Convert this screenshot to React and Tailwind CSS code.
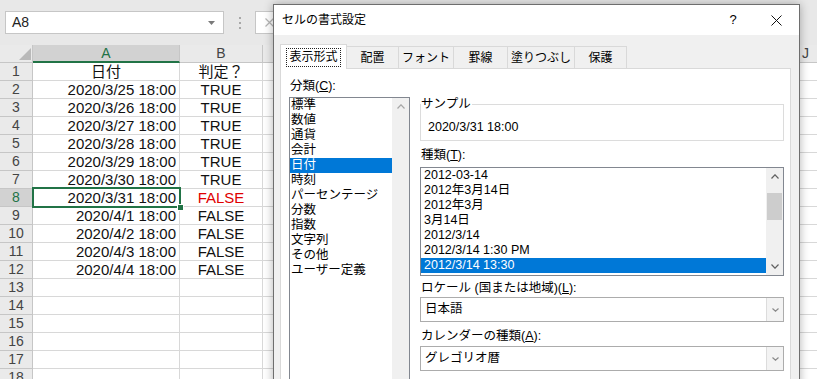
import React from 'react';

const F = "font-['Liberation_Sans','Noto_Sans_CJK_JP',sans-serif]";

function Chevron({ dir = 'down', color = '#606060', w = 8, h = 5 }) {
  const pts =
    dir === 'up'
      ? `0.5,${h - 0.5} ${w / 2},0.8 ${w - 0.5},${h - 0.5}`
      : `0.5,0.5 ${w / 2},${h - 0.8} ${w - 0.5},0.5`;
  return (
    <svg width={w} height={h} viewBox={`0 0 ${w} ${h}`}>
      <polyline points={pts} fill="none" stroke={color} strokeWidth="1.2" />
    </svg>
  );
}

// columns C..I lie under the dialog; only J shows at the right edge
const restCols = ['', '', '', '', '', '', '', 'J'];
const restW = ['w-[72px]', 'w-[72px]', 'w-[72px]', 'w-[73px]', 'w-[73px]', 'w-[72px]', 'w-[73px]', 'w-[72px]'];

const data = [
  { a: '日付', b: '判定？', head: true },
  { a: '2020/3/25 18:00', b: 'TRUE' },
  { a: '2020/3/26 18:00', b: 'TRUE' },
  { a: '2020/3/27 18:00', b: 'TRUE' },
  { a: '2020/3/28 18:00', b: 'TRUE' },
  { a: '2020/3/29 18:00', b: 'TRUE' },
  { a: '2020/3/30 18:00', b: 'TRUE' },
  { a: '2020/3/31 18:00', b: 'FALSE', sel: true },
  { a: '2020/4/1 18:00', b: 'FALSE' },
  { a: '2020/4/2 18:00', b: 'FALSE' },
  { a: '2020/4/3 18:00', b: 'FALSE' },
  { a: '2020/4/4 18:00', b: 'FALSE' },
  {},
  {},
  {},
  {},
  {},
  {},
];

function Excel() {
  return (
    <div className="flex flex-col">
      {/* formula bar band */}
      <div className="h-[45px] bg-[#e8e8e8] flex items-start pt-[11px] pl-[5px]">
        <div className="w-[219px] h-[23px] bg-white border border-[#c6c6c6] flex items-center justify-between pl-[6px] pr-[8px] text-[14px] text-[#222]">
          <span>A8</span>
          <svg width="7" height="4" viewBox="0 0 7 4">
            <polygon points="0,0 7,0 3.5,4" fill="#7a7a7a" />
          </svg>
        </div>
        <div className="w-[31px] h-[23px] flex flex-col items-center justify-center gap-[3px]">
          <div className="w-[2px] h-[2px] bg-[#a8a8a8]" />
          <div className="w-[2px] h-[2px] bg-[#a8a8a8]" />
          <div className="w-[2px] h-[2px] bg-[#a8a8a8]" />
        </div>
        <div className="w-[60px] h-[23px] bg-white border border-[#c6c6c6] flex items-center pl-[9px]">
          <svg width="9" height="9" viewBox="0 0 9 9">
            <path d="M0.5 0.5L8.5 8.5M8.5 0.5L0.5 8.5" stroke="#b5b5b5" strokeWidth="1.2" />
          </svg>
        </div>
      </div>

      {/* column headers */}
      <div className="flex h-[18px] text-[14px] leading-[17px] text-[#444] bg-[#eaeaea]">
        <div className="w-[33px] shrink-0 border-r border-b border-[#c6c6c6] flex items-end justify-end pr-[1px] pb-[2px]">
          <svg width="12" height="12" viewBox="0 0 12 12">
            <polygon points="12,0 12,12 0,12" fill="#b9b9b9" />
          </svg>
        </div>
        <div className="w-[147px] shrink-0 bg-[#d2d2d2] text-[#217346] border-r border-[#c6c6c6] border-b-2 border-b-[#217346] text-center">
          A
        </div>
        <div className="w-[83px] shrink-0 border-r border-b border-[#c6c6c6] text-center">B</div>
        {restCols.map((c, i) => (
          <div key={i} className={`${restW[i]} shrink-0 border-r border-b border-[#c6c6c6] text-center`}>
            {c}
          </div>
        ))}
      </div>

      {/* rows */}
      {data.map((r, i) => (
        <div key={i} className="flex h-[18px] leading-[17px] text-[15px] text-[#111]">
          <div
            className={`w-[33px] shrink-0 border-r border-b border-[#c6c6c6] text-center text-[14px] ${
              r.sel ? 'bg-[#d2d2d2] text-[#217346]' : 'bg-[#eaeaea] text-[#444]'
            }`}
          >
            {i + 1}
          </div>
          <div
            className={`relative w-[147px] shrink-0 border-r border-b border-[#d8d8d8] ${
              r.head ? 'text-center' : 'text-right pr-[3px]'
            }`}
          >
            {r.a}
            {r.sel && (
              <>
                <div className="absolute -left-px -top-[2px] -right-[2px] -bottom-[2px] border-2 border-[#217346] z-10" />
                <div className="absolute -right-[5px] -bottom-[5px] w-[7px] h-[7px] bg-[#217346] border border-white z-20" />
              </>
            )}
          </div>
          <div
            className={`w-[83px] shrink-0 border-r border-b border-[#d8d8d8] text-center ${
              r.sel ? 'text-[#e00000]' : ''
            }`}
          >
            {r.b}
          </div>
          {restW.map((w, j) => (
            <div key={j} className={`${w} shrink-0 border-r border-b border-[#d8d8d8]`} />
          ))}
        </div>
      ))}
    </div>
  );
}

const cats = ['標準', '数値', '通貨', '会計', '日付', '時刻', 'パーセンテージ', '分数', '指数', '文字列', 'その他', 'ユーザー定義'];
const types = ['2012-03-14', '2012年3月14日', '2012年3月', '3月14日', '2012/3/14', '2012/3/14 1:30 PM', '2012/3/14 13:30'];

const tabs = [
  { t: '表示形式', w: 'w-[67px]', sel: true },
  { t: '配置', w: 'w-[53px]' },
  { t: 'フォント', w: 'w-[56px]' },
  { t: '罫線', w: 'w-[55px]' },
  { t: '塗りつぶし', w: 'w-[68px]' },
  { t: '保護', w: 'w-[53px]' },
];

function Combo({ value }) {
  return (
    <div className="h-[25px] border border-[#acacac] bg-white flex">
      <div className="flex-1 pl-[4px] flex items-center">{value}</div>
      <div className="w-[17px] border-l border-[#dcdcdc] bg-[#f3f3f3] flex items-center justify-center">
        <Chevron color="#8a8a8a" w={7} h={4} />
      </div>
    </div>
  );
}

function Dialog() {
  return (
    <div
      className={`absolute left-[273px] top-[4px] w-[527px] h-[430px] flex flex-col bg-[#f0f0f0] border border-[#6e6e6e] shadow-[0_0_9px_rgba(0,0,0,0.3)] text-[12.5px] text-black ${F}`}
    >
      <div className="h-[30px] shrink-0 bg-white flex items-center">
        <span className="pl-[8px] text-[12px]">セルの書式設定</span>
        <div className="ml-auto w-[46px] flex justify-center pl-[6px] text-[13px]">?</div>
        <div className="w-[46px] flex justify-center">
          <svg width="11" height="11" viewBox="0 0 11 11">
            <path d="M0.5 0.5L10.5 10.5M10.5 0.5L0.5 10.5" stroke="#111" strokeWidth="1" />
          </svg>
        </div>
      </div>

      <div className="flex-1 flex flex-col pt-[9px] pl-[6px] pr-[8px]">
        <div className="flex items-end h-[24px] shrink-0 text-[12px]">
          {tabs.map((tb, i) => (
            <div
              key={tb.t}
              className={`${tb.w} shrink-0 flex items-center justify-center overflow-hidden border-t border-l border-r border-[#d9d9d9] ${
                i > 0 ? '-ml-px' : ''
              } ${tb.sel ? 'h-[25px] -mb-px bg-white relative z-10' : 'h-[22px] bg-[#f0f0f0]'}`}
            >
              {tb.sel ? (
                <span className="border border-dotted border-[#222] px-[2px] leading-[17px]">{tb.t}</span>
              ) : (
                <span className="leading-[16px]">{tb.t}</span>
              )}
            </div>
          ))}
        </div>

        <div className="flex-1 bg-white border border-[#d9d9d9] flex items-start pl-[8px] pt-[9px]">
          {/* category column */}
          <div className="w-[121px] shrink-0 flex flex-col">
            <div className="h-[16px] leading-[16px] pl-px">
              分類(<span className="underline">C</span>):
            </div>
            <div className="mt-[3px] h-[300px] border border-[#828790] flex">
              <div className="flex-1 flex flex-col">
                {cats.map((c, i) => (
                  <div
                    key={c}
                    className={`h-[15px] leading-[15px] pl-px ${i === 4 ? 'bg-[#0078d7] text-white' : ''}`}
                  >
                    {c}
                  </div>
                ))}
              </div>
              <div className="w-[17px] bg-[#f0f0f0] flex flex-col items-center pt-[6px]">
                <Chevron dir="up" color="#a6a6a6" />
              </div>
            </div>
          </div>

          {/* right column */}
          <div className="ml-[10px] w-[364px] shrink-0 mt-[19px] flex flex-col">
            <fieldset className="h-[44px] border border-[#dcdcdc]">
              <legend className="leading-[15px] pr-[1px]">サンプル</legend>
              <div className="pl-[7px] pt-[7px] leading-[16px]">2020/3/31 18:00</div>
            </fieldset>

            <div className="mt-[6px] h-[16px] leading-[16px] pl-px">
              種類(<span className="underline">T</span>):
            </div>
            <div className="mt-[4px] h-[109px] border border-[#828790] flex">
              <div className="flex-1 flex flex-col">
                {types.map((t, i) => (
                  <div
                    key={t}
                    className={`h-[15px] leading-[15px] pl-[3px] ${i === 6 ? 'bg-[#0078d7] text-white' : ''}`}
                  >
                    {t}
                  </div>
                ))}
              </div>
              <div className="w-[17px] bg-[#f0f0f0] flex flex-col">
                <div className="h-[17px] flex items-center justify-center">
                  <Chevron dir="up" />
                </div>
                <div className="flex-1 px-[1px]">
                  <div className="mt-[8px] h-[27px] bg-[#cdcdcd]" />
                </div>
                <div className="h-[17px] flex items-center justify-center">
                  <Chevron />
                </div>
              </div>
            </div>

            <div className="mt-[4px] h-[16px] leading-[16px] pl-px">
              ロケール (国または地域)(<span className="underline">L</span>):
            </div>
            <div className="mt-[1px]">
              <Combo value="日本語" />
            </div>

            <div className="mt-[6px] h-[16px] leading-[16px] pl-px">
              カレンダーの種類(<span className="underline">A</span>):
            </div>
            <div className="mt-[2px]">
              <Combo value="グレゴリオ暦" />
            </div>
          </div>
        </div>
      </div>
    </div>
  );
}

export default function App() {
  return (
    <div className={`relative w-[817px] h-[379px] overflow-hidden bg-white ${F}`}>
      <Excel />
      <Dialog />
    </div>
  );
}
